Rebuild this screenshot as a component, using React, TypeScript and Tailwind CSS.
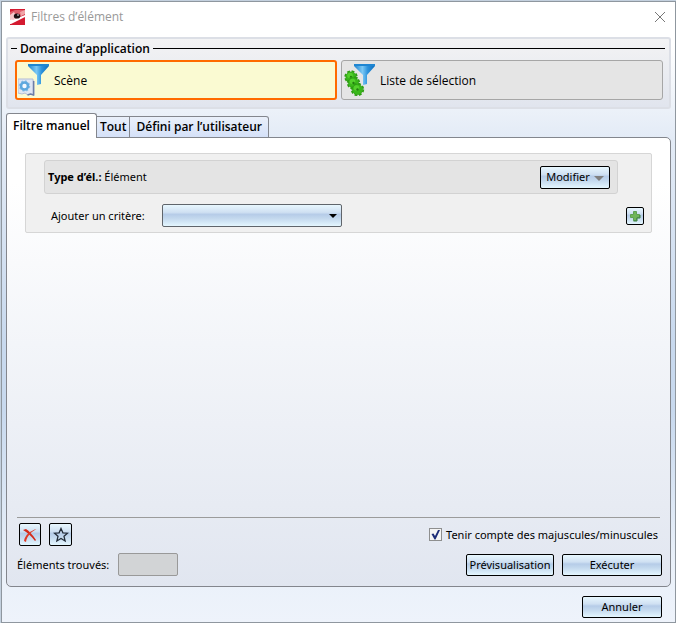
import type { ReactNode } from "react";

function Funnel() {
  return (
    <>
      <defs>
        <linearGradient id="funnel" x1="0" x2="1">
          <stop offset="0" stopColor="#1b82cf" />
          <stop offset="0.4" stopColor="#7cc8f4" />
          <stop offset="0.65" stopColor="#2d93dc" />
          <stop offset="1" stopColor="#0f6fbe" />
        </linearGradient>
      </defs>
      <path d="M10 0h21v2l-8 9v9l-4 1V11l-9-9z" fill="url(#funnel)" />
      <path d="M10 0h21v2H10z" fill="#1f86d2" />
    </>
  );
}

function SceneIcon() {
  return (
    <svg className="size-8 shrink-0" viewBox="0 0 32 32">
      <Funnel />
      <path d="M0 15h15v2h1v14l-3-1-3 1-3-2-3 1-4-1z" fill="#dfe6f4" stroke="#b3bdd6" />
      <path d="M15.500 17v14l-3-1-3 1" fill="none" stroke="#6d7da6" strokeWidth="1.500" />
      <circle cx="6.500" cy="22" r="5" fill="none" stroke="#8fc0e6" strokeWidth="1.500" strokeDasharray="2 1.900" />
      <circle cx="6.500" cy="22" r="3.500" fill="#f4f9ff" stroke="#5ea8de" strokeWidth="2.600" />
    </svg>
  );
}

function Gear({ x, y }: { x: number; y: number }) {
  return (
    <g transform={`translate(${x} ${y})`}>
      <circle r="5.800" fill="none" stroke="#2f9f14" strokeWidth="1.800" strokeDasharray="2.800 1.750" />
      <circle r="5.200" fill="#3ab81a" stroke="#2a9512" strokeWidth="0.500" />
      <circle cx="-1" cy="-1.500" r="2.800" fill="#55d02c" />
      <circle r="1.200" fill="#237f10" />
    </g>
  );
}

function SelectionIcon() {
  return (
    <svg className="size-8 shrink-0" viewBox="0 0 32 32">
      <Funnel />
      <Gear x={7} y={13} />
      <Gear x={9.5} y={19} />
      <Gear x={13.5} y={25.5} />
    </svg>
  );
}

function AppLogo() {
  return (
    <svg className="size-4" viewBox="0 0 16 16">
      <path d="M0 0h15v16H0z" fill="#d41a30" />
      <path d="M0 3l5-2h10v4L6 10H0z" fill="#e0606c" />
      <path d="M0 6l4-3 3 6-5 2H0z" fill="#f5c9cb" />
      <path d="M10 3l5-2v4l-4 2z" fill="#f0a4a8" />
      <path d="M0 11l5-1 10-4v2L7 12l-6 3H0z" fill="#fff" />
      <ellipse cx="7" cy="7" rx="3.200" ry="2.600" fill="#1c1012" />
      <circle cx="8" cy="6" r="0.800" fill="#fff" />
    </svg>
  );
}

interface ActionButtonProps {
  className: string;
  label?: string;
  children: ReactNode;
}

function ActionButton({ className, label, children }: ActionButtonProps) {
  return (
    <button
      type="button"
      aria-label={label}
      className={`flex items-center justify-center whitespace-nowrap rounded-[2px] border border-black bg-[linear-gradient(#e8f7fe,#cfe0f2_35%,#b6cce8_45%,#c4d9ee_65%,#e4f6fe)] ${className}`}
    >
      {children}
    </button>
  );
}

export default function App() {
  return (
    <div className="min-h-screen bg-[#c3d0de] pt-px pl-px font-['Noto_Sans','Open_Sans',sans-serif] text-[11px] leading-4 text-black">
      <div className="flex min-h-[622px] flex-col border border-[#8f979f] bg-[linear-gradient(#fff_7%,#e3ebf6_22%,#c8d9ee_55%,#c8d9ee_66%,#e9f0f9_90%,#eef3fb)] px-1">
        <header className="flex h-8 items-center justify-between pr-[5px] pb-[3px] pl-1 font-['Open_Sans','Noto_Sans',sans-serif]">
          <div className="flex items-center gap-[5px] text-xs text-[#999]">
            <AppLogo />
            <h1>Filtres d’élément</h1>
          </div>
          <button type="button" aria-label="Fermer">
            <svg className="size-3" viewBox="0 0 12 12" stroke="#777" fill="none">
              <path d="M1 1l10 10M11 1L1 11" />
            </svg>
          </button>
        </header>

        <section className="mt-[3px] rounded-[3px] border-2 border-[#dcdfe6] bg-linear-to-b from-[#f3f3f4] to-[#e1e5ee] pr-[6px] pb-[7px] pl-[7px] font-['Open_Sans','Noto_Sans',sans-serif] text-xs">
          <div className="mb-[2px] -ml-1 flex h-[19px] items-center gap-[3px] font-semibold">
            <span className="h-px w-[6px] bg-black" />
            <h2>Domaine d’application</h2>
            <span className="-mr-[2px] h-px flex-1 bg-black" />
          </div>
          <div className="flex gap-1">
            <button
              type="button"
              className="flex h-10 flex-1 items-center gap-1 rounded-[3px] border-2 border-[#ff6a00] bg-[#fafad2] px-px"
            >
              <SceneIcon />
              <span className="pt-[2px]">Scène</span>
            </button>
            <button
              type="button"
              className="flex h-10 flex-1 items-center gap-1 rounded-[3px] border border-[#a6a6a6] bg-[#e5e5e5] px-[2px]"
            >
              <SelectionIcon />
              <span className="pt-[2px]">Liste de sélection</span>
            </button>
          </div>
        </section>

        <div
          role="tablist"
          className="relative z-10 mt-1 -mb-px flex items-end font-['Open_Sans','Noto_Sans',sans-serif] text-xs font-semibold"
        >
          <button
            type="button"
            role="tab"
            aria-selected="true"
            className="h-[25px] rounded-t-[3px] border border-b-0 border-[#83868d] bg-white px-[6px]"
          >
            Filtre manuel
          </button>
          <button
            type="button"
            role="tab"
            aria-selected="false"
            className="h-[22px] border border-l-0 border-[#83868d] bg-linear-to-b from-[#eaf0fa] to-[#d5e1f8] px-[3px]"
          >
            Tout
          </button>
          <button
            type="button"
            role="tab"
            aria-selected="false"
            className="h-[22px] rounded-tr-[3px] border border-l-0 border-[#83868d] bg-linear-to-b from-[#eaf0fa] to-[#d5e1f8] px-[6px]"
          >
            Défini par l’utilisateur
          </button>
        </div>

        <main className="flex flex-1 flex-col rounded-b-[5px] rounded-tr-[5px] border border-[#83868d] bg-linear-to-b from-white from-10% to-[#e1e6f0] px-[10px]">
          <section className="mx-2 mt-[15px] rounded-[2px] border border-[#d6d6d6] bg-[#f0f0f0] pt-[6px] pb-[5px] pl-[18px]">
            <div className="mr-[33px] flex h-[34px] items-center justify-between rounded-[3px] border border-[#d2d2d2] bg-[#e4e4e4] pr-[7px] pl-[3px]">
              <p>
                <b>Type d’él.:</b> Élément
              </p>
              <ActionButton className="h-[23px] w-[70px] gap-1">
                Modifier
                <svg className="mt-[2px] h-[5px] w-[10px]" viewBox="0 0 10 5">
                  <path d="M0 0h10L5 5z" fill="#808080" />
                </svg>
              </ActionButton>
            </div>
            <div className="mt-[10px] flex items-center justify-between pr-[7px]">
              <div className="flex items-center pl-[7px]">
                <label htmlFor="critere" className="w-[111px]">
                  Ajouter un critère:
                </label>
                <div className="relative">
                  <select
                    id="critere"
                    className="block h-[23px] w-[180px] appearance-none rounded-[2px] border border-[#60656b] bg-[linear-gradient(#e8f7fe,#cfe0f2_35%,#b6cce8_45%,#c4d9ee_65%,#e4f6fe)]"
                  />
                  <svg className="pointer-events-none absolute top-[10px] right-[5px] h-1 w-2" viewBox="0 0 8 4">
                    <path d="M0 0h8L4 4z" />
                  </svg>
                </div>
              </div>
              <ActionButton className="size-[18px]" label="Ajouter">
                <svg className="size-3" viewBox="0 0 12 12">
                  <path d="M4.500 1.500h3v3h3v3h-3v3h-3v-3h-3v-3h3z" fill="#6fb558" stroke="#5da052" />
                  <path d="M4.500 11h3.500V8h3V5" fill="none" stroke="#3d8040" />
                </svg>
              </ActionButton>
            </div>
          </section>

          <footer className="mt-auto border-t border-[#9b9b9b] pt-[5px] pb-[10px]">
            <div className="flex items-center justify-between">
              <div className="flex gap-2 pl-[2px]">
                <ActionButton className="h-[23px] w-[22px]" label="Supprimer">
                  <svg className="size-4" viewBox="0 0 16 16">
                    <path d="M1 3l3-1c3 2 7 6 10 11l-1 1C9 9 6 6 1 3z" fill="#d42a1a" />
                    <path d="M14.500 2C9 5 5 9 4 15l-2-1C3 8 8 4 14.500 2z" fill="#e03a26" />
                  </svg>
                </ActionButton>
                <ActionButton className="size-[23px]" label="Favori">
                  <svg className="size-4" viewBox="0 0 16 16" fill="none" stroke="#222b38" strokeWidth="1.300">
                    <path d="M8 1.500l1.900 4.300 4.600.4-3.500 3.100 1.100 4.700L8 11.500 3.900 14 5 9.300 1.500 6.200l4.600-.4z" />
                  </svg>
                </ActionButton>
              </div>
              <label className="flex items-center gap-1 pr-[2px]">
                <span className="relative block size-[13px]">
                  <input
                    type="checkbox"
                    defaultChecked
                    className="peer block size-[13px] appearance-none border border-[#8e8f8f] bg-[#f4f4f4]"
                  />
                  <svg
                    className="pointer-events-none absolute inset-0 hidden size-[13px] peer-checked:block"
                    viewBox="0 0 13 13"
                  >
                    <path d="M2.500 6l2-.5L6 8l3-6h2L6.500 11.500h-1z" fill="#1c2c78" />
                  </svg>
                </span>
                Tenir compte des majuscules/minuscules
              </label>
            </div>
            <div className="mt-[7px] flex items-center justify-between">
              <div className="flex items-center">
                <label htmlFor="trouves" className="w-[101px]">
                  Éléments trouvés:
                </label>
                <input
                  id="trouves"
                  disabled
                  className="h-[23px] w-[60px] rounded-[2px] border border-[#999] bg-[#d2d4d6]"
                />
              </div>
              <div className="-mr-[2px] flex gap-2">
                <ActionButton className="h-[22px] w-[88px]">Prévisualisation</ActionButton>
                <ActionButton className="h-[22px] w-[100px]">Exécuter</ActionButton>
              </div>
            </div>
          </footer>
        </main>

        <div className="flex justify-end pt-[9px] pr-[9px] pb-1">
          <ActionButton className="h-[22px] w-[80px]">Annuler</ActionButton>
        </div>
      </div>
    </div>
  );
}
